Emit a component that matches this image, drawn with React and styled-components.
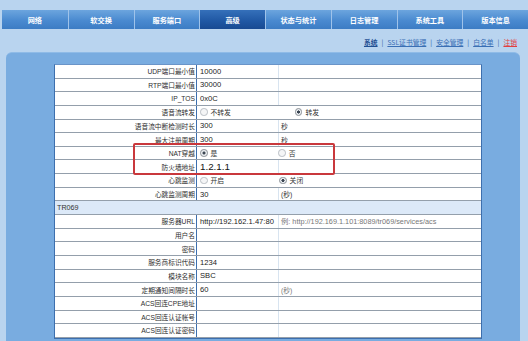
import React from "react";
import styled, { createGlobalStyle, css } from "styled-components";

const GlobalStyle = createGlobalStyle`
  html, body { margin: 0; padding: 0; }
  body {
    background: #b9d4ef;
    font-family: "Liberation Sans", "Noto Sans CJK SC", sans-serif;
    overflow: hidden;
  }
`;

const Page = styled.div`
  width: 528px;
  height: 341px;
  padding-top: 10px;
  box-sizing: border-box;
  overflow: hidden;
`;

const NavBar = styled.div`
  display: flex;
  height: 19px;
  margin: 0 0 0 2px;
`;

const Tab = styled.div`
  flex: 0 0 65.75px;
  display: flex;
  align-items: center;
  justify-content: center;
  box-sizing: border-box;
  border-left: 1px solid #9fc3ea;
  color: #ffffff;
  font-family: "Noto Sans CJK SC", sans-serif;
  font-size: 7.2px;
  font-weight: 700;
  background: linear-gradient(#6ca5de, #4a8ad0 55%, #3c7cc4);
  &:first-child { border-left: none; }
  ${(p) =>
    p.$active &&
    css`
      background: linear-gradient(#3570ba, #1f57a3 60%, #184a92);
    `}
`;

const SubLinks = styled.div`
  display: flex;
  justify-content: flex-end;
  align-items: center;
  height: 23px;
  padding: 2px 11px 0 0;
  box-sizing: border-box;
  font-family: "Noto Sans CJK SC", sans-serif;
  font-size: 6.8px;
  color: #2e63a8;
`;

const SubLink = styled.span`
  text-decoration: underline;
  color: ${(p) => (p.$danger ? "#e14040" : p.$current ? "#1f4f93" : "#3a6fb5")};
  font-weight: ${(p) => (p.$current ? 700 : 400)};
`;

const Sep = styled.span`
  margin: 0 4px;
  color: #2e5f9f;
`;

const Panel = styled.div`
  margin: 0 8px 0 6px;
  background: #79ace0;
  border-radius: 6px 6px 0 0;
  border-top: 1px solid #8fbbe7;
  padding: 11px 38px 20px 48px;
  height: 300px;
`;

const Table = styled.div`
  position: relative;
  background: #ffffff;
  border: 1px solid #3d6fae;
  border-top-color: #6a94c8;
`;

const Row = styled.div`
  display: grid;
  grid-template-columns: 142px 82px 1fr;
  height: 13.65px;
  box-sizing: border-box;
  border-bottom: 1px solid #949fab;
  align-items: stretch;
  &:last-child { border-bottom: none; }
`;

const Label = styled.div`
  display: flex;
  align-items: center;
  justify-content: flex-end;
  padding-right: 1px;
  border-right: 1px solid #3d6fae;
  font-size: 6.7px;
  color: #2e2e2e;
  white-space: nowrap;
`;

const Value = styled.div`
  display: flex;
  align-items: center;
  padding-left: 3px;
  border-right: 1px solid #d8e4f0;
  font-size: ${(p) => (p.$big ? "9.8px" : "7.6px")};
  color: ${(p) => (p.$big ? "#111" : "#222")};
  white-space: nowrap;
  overflow: hidden;
  ${(p) => p.$span && css`grid-column: 2 / 4; border-right: none;`}
`;

const Extra = styled.div`
  display: flex;
  align-items: center;
  padding-left: 2px;
  font-size: ${(p) => (p.$hint ? "7.3px" : "6.8px")};
  color: ${(p) => (p.$muted ? "#777" : "#333")};
  white-space: nowrap;
  overflow: hidden;
`;

const SectionRow = styled.div`
  height: 13.65px;
  box-sizing: border-box;
  border-bottom: 1px solid #949fab;
  background: #dce9f8;
  display: flex;
  align-items: center;
  padding-left: 2px;
  font-size: 7.2px;
  color: #333;
`;

const RadioItem = styled.span`
  display: inline-flex;
  align-items: center;
  gap: 3px;
  font-size: 6.8px;
  color: #333;
  margin-left: ${(p) => p.$offset || 0}px;
`;

const RadioDot = styled.span`
  width: 5.5px;
  height: 5.5px;
  border-radius: 50%;
  border: 1px solid ${(p) => (p.$on ? "#8a8f96" : "#b9bec4")};
  background: ${(p) =>
    p.$on ? "radial-gradient(circle, #3b4552 0 1.4px, #e9ecef 1.7px)" : "#f4f5f6"};
`;

const Highlight = styled.div`
  position: absolute;
  left: 78px;
  top: 78px;
  width: 198px;
  height: 28px;
  border: 2px solid #c9383c;
  border-radius: 2px;
  pointer-events: none;
`;

const tabs = ["网络", "软交换", "服务端口", "高级", "状态与统计", "日志管理", "系统工具", "版本信息"];

const rows = [
  { label: "UDP端口最小值", value: "10000" },
  { label: "RTP端口最小值", value: "30000" },
  { label: "IP_TOS", value: "0x0C" },
  { label: "语音流转发", radios: ["不转发", "转发"], on: 1, offset: 64 },
  { label: "语音流中断检测时长", value: "300", extra: "秒" },
  { label: "最大注册周期", value: "300", extra: "秒" },
  { label: "NAT穿越", radios: ["是", "否"], on: 0, offset: 61 },
  { label: "防火墙地址", value: "1.2.1.1", big: true },
  { label: "心跳监测", radios: ["开启", "关闭"], on: 1, offset: 55 },
  { label: "心跳监测周期", value: "30", extra: "(秒)" },
  { section: "TR069" },
  { label: "服务器URL", value: "http://192.162.1.47:80", extra: "例: http://192.169.1.101:8089/tr069/services/acs", muted: true, hint: true },
  { label: "用户名", value: "" },
  { label: "密码", value: "" },
  { label: "服务商标识代码", value: "1234" },
  { label: "模块名称", value: "SBC" },
  { label: "定期通知间隔时长", value: "60", extra: "(秒)", muted: true },
  { label: "ACS回连CPE地址", value: "" },
  { label: "ACS回连认证帐号", value: "" },
  { label: "ACS回连认证密码", value: "" },
];

export default function App() {
  return (
    <>
      <GlobalStyle />
      <Page>
        <NavBar>
          {tabs.map((t) => (
            <Tab key={t} $active={t === "高级"}>{t}</Tab>
          ))}
        </NavBar>
        <SubLinks>
          <SubLink $current>系统</SubLink>
          <Sep>|</Sep>
          <SubLink>SSL证书管理</SubLink>
          <Sep>|</Sep>
          <SubLink>安全管理</SubLink>
          <Sep>|</Sep>
          <SubLink>白名单</SubLink>
          <Sep>|</Sep>
          <SubLink $danger>注销</SubLink>
        </SubLinks>
        <Panel>
          <Table>
            {rows.map((r, i) =>
              r.section ? (
                <SectionRow key={i}>{r.section}</SectionRow>
              ) : (
                <Row key={i}>
                  <Label>{r.label}</Label>
                  {r.radios ? (
                    <Value $span>
                      <RadioItem>
                        <RadioDot $on={r.on === 0} />
                        {r.radios[0]}
                      </RadioItem>
                      <RadioItem $offset={r.offset}>
                        <RadioDot $on={r.on === 1} />
                        {r.radios[1]}
                      </RadioItem>
                    </Value>
                  ) : (
                    <>
                      <Value $big={r.big}>{r.value}</Value>
                      <Extra $muted={r.muted} $hint={r.hint}>{r.extra || ""}</Extra>
                    </>
                  )}
                </Row>
              )
            )}
            <Highlight />
          </Table>
        </Panel>
      </Page>
    </>
  );
}
